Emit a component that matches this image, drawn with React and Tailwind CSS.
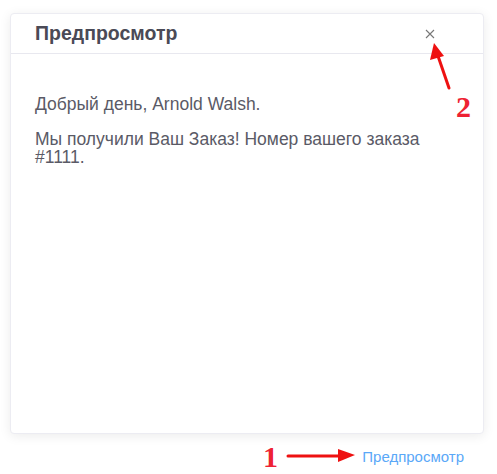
import React from 'react';

const Annotations = () => (
  <>
    <svg className="absolute left-0 top-0 pointer-events-none" width="497" height="474">
      <line x1="449" y1="88" x2="438" y2="56" stroke="#ee1111" strokeWidth="3" strokeLinecap="round" />
      <polygon points="434,43 430,60 444,56" fill="#ee1111" />
      <line x1="288" y1="456" x2="340" y2="456" stroke="#ee1111" strokeWidth="3" strokeLinecap="round" />
      <polygon points="355,455 338,449 338,462" fill="#ee1111" />
    </svg>
    <span className="absolute left-[456px] top-[92px] text-[30px] font-bold text-[#ee2233] leading-none [font-family:'Liberation_Serif',serif]">
      2
    </span>
    <span className="absolute left-[263px] top-[442px] text-[30px] font-bold text-[#ee2233] leading-none [font-family:'Liberation_Serif',serif]">
      1
    </span>
  </>
);

export default function App() {
  return (
    <div className="relative w-[497px] h-[474px] bg-white [font-family:'Liberation_Sans',Arial,sans-serif]">
      <div className="pt-[13px] pl-[10px]">
        <div className="w-[474px] h-[421px] bg-white rounded-[4px] border border-[#ececf2] shadow-[0_2px_12px_rgba(0,0,0,0.08)] flex flex-col">
          <div className="h-[40px] flex items-center justify-between pl-[24px] pr-[48px] border-b border-[#e8e8ef]">
            <span className="text-[19.5px] font-bold text-[#4a4a56]">Предпросмотр</span>
            <svg width="10" height="10" viewBox="0 0 10 10">
              <path d="M1 1 L9 9 M9 1 L1 9" stroke="#777" strokeWidth="1.1" />
            </svg>
          </div>
          <div className="px-[24px] pt-[41px] text-[17.5px] leading-[18px] text-[#5a5a66]">
            <p>Добрый день, Arnold Walsh.</p>
            <p className="mt-[17px] w-[400px]">Мы получили Ваш Заказ! Номер вашего заказа #1111.</p>
          </div>
        </div>
      </div>
      <div className="flex justify-end pr-[33px] pt-[12px]">
        <a className="text-[15px] text-[#5aa8f8]">Предпросмотр</a>
      </div>
      <Annotations />
    </div>
  );
}
